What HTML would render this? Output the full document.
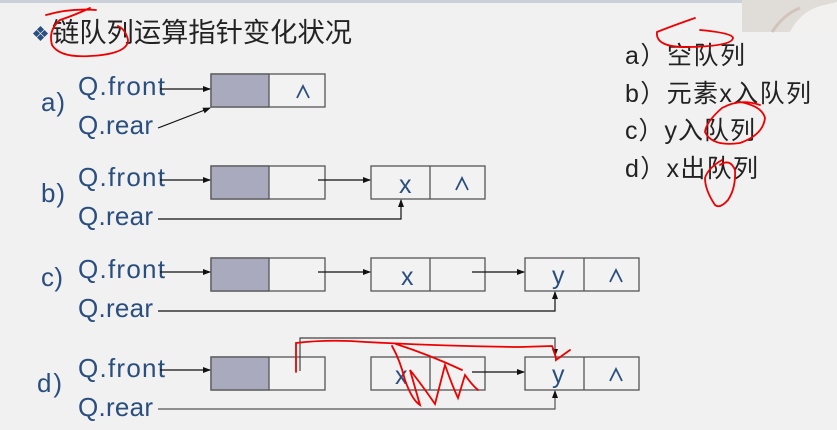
<!DOCTYPE html>
<html><head><meta charset="utf-8"><style>
html,body{margin:0;padding:0;background:#f1f1f1;}
svg{display:block}
</style></head><body>
<svg width="837" height="430" viewBox="0 0 837 430" xmlns="http://www.w3.org/2000/svg">
<defs>
<marker id="ar" markerWidth="8" markerHeight="8" refX="7" refY="4" orient="auto" markerUnits="userSpaceOnUse">
<path d="M0,1 L8,4 L0,7 Z" fill="#111"/></marker>
</defs>
<rect width="837" height="430" fill="#f1f1f1"/>
<rect x="0" y="0" width="837" height="3" fill="#c9d0d8"/>
<rect x="742" y="0" width="95" height="32" fill="#e0dcd8"/>
<path d="M790,32 Q800,12 820,6 L837,2 L837,32 Z" fill="#f3f1ef"/>
<path d="M772,32 Q784,14 800,8" stroke="#d2c4bc" stroke-width="3" fill="none"/>
<g fill="#2a4e7e">
<rect x="38" y="27" width="5" height="5" transform="rotate(45 40.5 29.5)"/>
<rect x="38" y="35" width="5" height="5" transform="rotate(45 40.5 37.5)"/>
<rect x="34" y="31" width="5" height="5" transform="rotate(45 36.5 33.5)"/>
<rect x="42" y="31" width="5" height="5" transform="rotate(45 44.5 33.5)"/>
</g>
<text x="52" y="42" font-family="'Liberation Sans','Noto Sans CJK SC',sans-serif" font-size="27" fill="#222" textLength="300" lengthAdjust="spacingAndGlyphs">链队列运算指针变化状况</text>

<g font-family="'Liberation Sans','Noto Sans CJK SC',sans-serif" fill="#2a4e7e" font-size="26" lengthAdjust="spacingAndGlyphs">
<text x="41" y="111" textLength="24">a)</text>
<text x="78" y="95" textLength="87">Q.front</text>
<text x="78" y="134" textLength="75">Q.rear</text>
<text x="41" y="202" textLength="24">b)</text>
<text x="78" y="186" textLength="87">Q.front</text>
<text x="78" y="225" textLength="75">Q.rear</text>
<text x="41" y="286" textLength="22">c)</text>
<text x="78" y="278" textLength="87">Q.front</text>
<text x="78" y="317" textLength="75">Q.rear</text>
<text x="37" y="392" textLength="25">d)</text>
<text x="78" y="377" textLength="87">Q.front</text>
<text x="78" y="416" textLength="75">Q.rear</text>
</g>

<g stroke="#555" stroke-width="1.3" fill="#f2f2f2">
<rect x="211" y="74" width="114" height="33"/><rect x="211" y="74" width="58" height="33" fill="#aaaabf"/>
<rect x="211" y="166" width="114" height="33"/><rect x="211" y="166" width="58" height="33" fill="#aaaabf"/>
<rect x="371" y="166" width="114" height="33"/><line x1="430" y1="166" x2="430" y2="199"/>
<rect x="211" y="258" width="114" height="33"/><rect x="211" y="258" width="58" height="33" fill="#aaaabf"/>
<rect x="371" y="258" width="114" height="33"/><line x1="430" y1="258" x2="430" y2="291"/>
<rect x="525" y="258" width="114" height="33"/><line x1="584" y1="258" x2="584" y2="291"/>
<rect x="211" y="357" width="114" height="33"/><rect x="211" y="357" width="58" height="33" fill="#aaaabf"/>
<rect x="371" y="357" width="114" height="33"/><line x1="430" y1="357" x2="430" y2="390"/>
<rect x="525" y="357" width="114" height="33"/><line x1="584" y1="357" x2="584" y2="390"/>
</g>

<g stroke="#2a4e7e" stroke-width="1.8" fill="none">
<path d="M297,98 L303,86 L309,98"/>
<path d="M456,190 L462,178 L468,190"/>
<path d="M610,282 L616,270 L622,282"/>
<path d="M610,381 L616,369 L622,381"/>
</g>
<g font-family="'Liberation Sans',sans-serif" fill="#2a4e7e" font-size="25">
<text x="399" y="193">x</text>
<text x="401" y="285">x</text>
<text x="552" y="284">y</text>
<text x="395" y="384">x</text>
<text x="552" y="383">y</text>
</g>

<g stroke="#111" stroke-width="1.2" fill="none" marker-end="url(#ar)">
<line x1="160" y1="89" x2="210" y2="89"/>
<line x1="158" y1="128" x2="210" y2="108"/>
<line x1="160" y1="180" x2="210" y2="180"/>
<line x1="318" y1="180" x2="370" y2="180"/>
<polyline points="158,219 401,219 401,200"/>
<line x1="160" y1="272" x2="210" y2="272"/>
<line x1="318" y1="272" x2="370" y2="272"/>
<line x1="472" y1="272" x2="524" y2="272"/>
<polyline points="158,311 555,311 555,292"/>
<line x1="160" y1="370" x2="210" y2="370"/>
<line x1="472" y1="372" x2="524" y2="372"/>
<polyline points="158,409 555,409 555,391" stroke="#555"/>
<polyline points="300,371 300,338 555,338 555,356" stroke="#444"/>
</g>

<g font-family="'Liberation Sans','Noto Sans CJK SC',sans-serif" fill="#222" font-size="25" lengthAdjust="spacingAndGlyphs">
<text x="625" y="64" textLength="120">a）空队列</text>
<text x="625" y="102" textLength="186">b）元素x入队列</text>
<text x="625" y="139" textLength="130">c）y入队列</text>
<text x="625" y="177" textLength="133">d）x出队列</text>
</g>

<g stroke="#e00" stroke-width="1.8" fill="none" stroke-linecap="round">
<path d="M46,15 Q70,8 96,10 M90,8 Q75,15 60,20 Q48,30 52,45 Q60,58 90,56 Q128,54 128,40 Q126,30 118,26"/>
<path d="M695,18 Q672,26 657,32 Q655,48 690,47 Q732,46 733,38 Q733,33 700,30"/>
<path d="M760,105 Q740,98 722,108 Q706,122 705,132 Q712,147 740,143 Q763,135 765,118 Q762,106 740,102"/>
<path d="M722,160 Q708,168 705,178 Q705,190 715,205 Q720,209 728,200 Q736,188 735,170 Q730,158 720,165"/>
<path d="M296,372 L296,343 Q320,340 350,341 Q430,346 520,347 L552,346 Q556,355 556,360 L570,350"/>
<path d="M392,346 Q400,360 405,380 Q412,400 420,405 L410,370 Q422,385 435,404 L445,365 Q452,385 458,398 L465,375 Q472,385 478,390 M396,344 Q430,355 462,370"/>
</g>
</svg>
</body></html>
